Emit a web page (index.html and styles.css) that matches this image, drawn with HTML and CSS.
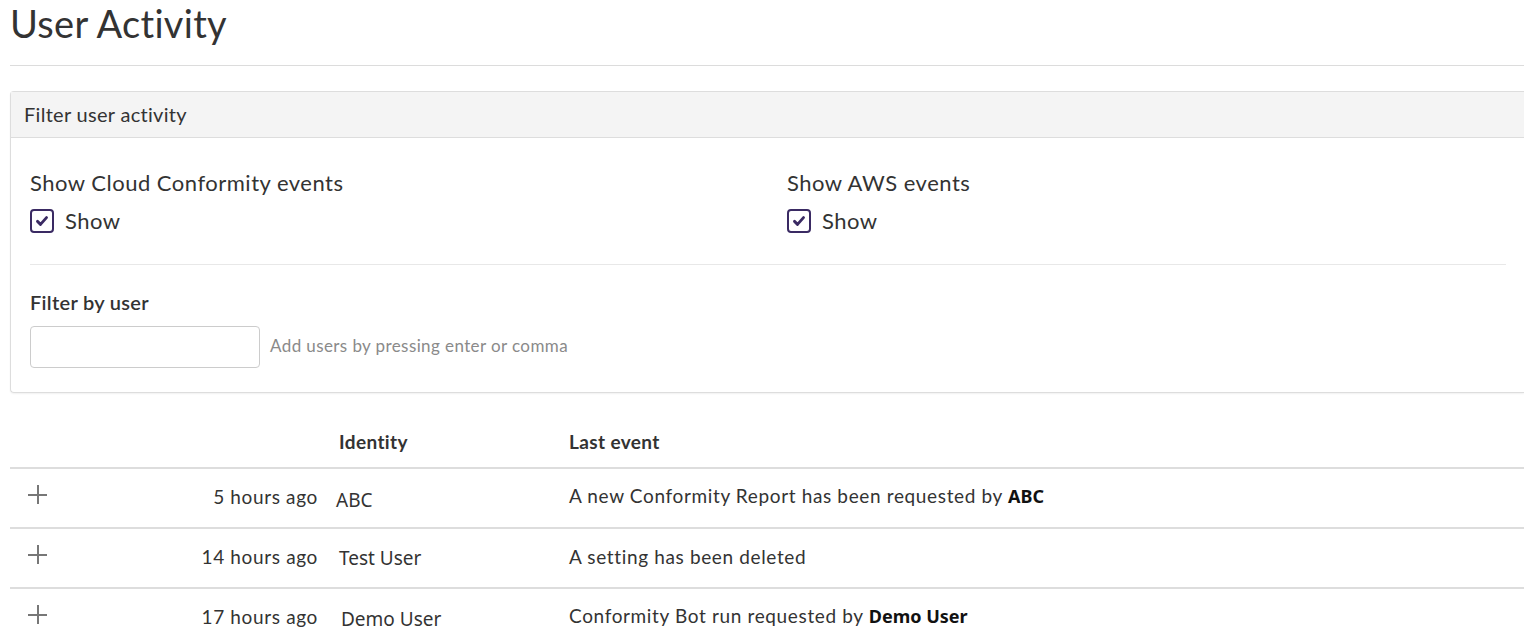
FILE: index.html
```html
<!DOCTYPE html>
<html>
<head>
<meta charset="utf-8">
<link rel="stylesheet" href="styles.css">
</head>
<body>
<div class="page">
  <h1 class="title">User Activity</h1>
  <hr class="rule">
  <section class="panel">
    <div class="panel-head">Filter user activity</div>
    <div class="panel-body">
      <div class="toggles">
        <div class="toggle">
          <div class="toggle-label">Show Cloud Conformity events</div>
          <label class="check">
            <span class="box"><svg viewBox="0 0 24 24"><path d="M6 12.5 L10 16.5 L18 7.5" fill="none" stroke="#3a2a63" stroke-width="3.8" stroke-linecap="round" stroke-linejoin="round"/></svg></span>
            <span>Show</span>
          </label>
        </div>
        <div class="toggle">
          <div class="toggle-label">Show AWS events</div>
          <label class="check">
            <span class="box"><svg viewBox="0 0 24 24"><path d="M6 12.5 L10 16.5 L18 7.5" fill="none" stroke="#3a2a63" stroke-width="3.8" stroke-linecap="round" stroke-linejoin="round"/></svg></span>
            <span>Show</span>
          </label>
        </div>
      </div>
      <div class="divider"></div>
      <div class="user-filter">
        <div class="filter-label">Filter by user</div>
        <div class="filter-row">
          <input class="user-input" type="text">
          <span class="help">Add users by pressing enter or comma</span>
        </div>
      </div>
    </div>
  </section>

  <div class="table">
    <div class="row head">
      <div class="c-plus"></div>
      <div class="c-time"></div>
      <div class="c-id">Identity</div>
      <div class="c-ev">Last event</div>
    </div>
    <div class="row">
      <div class="c-plus"><span class="plus"></span></div>
      <div class="c-time">5 hours ago</div>
      <div class="c-id id1">ABC</div>
      <div class="c-ev">A new Conformity Report has been requested by <b class="who">ABC</b></div>
    </div>
    <div class="row">
      <div class="c-plus"><span class="plus"></span></div>
      <div class="c-time">14 hours ago</div>
      <div class="c-id id2">Test User</div>
      <div class="c-ev">A setting has been deleted</div>
    </div>
    <div class="row">
      <div class="c-plus"><span class="plus"></span></div>
      <div class="c-time">17 hours ago</div>
      <div class="c-id id3">Demo User</div>
      <div class="c-ev">Conformity Bot run requested by <b class="who">Demo User</b></div>
    </div>
  </div>
</div>
</body>
</html>
```

FILE: styles.css
```css
* { box-sizing: border-box; }
html, body { margin: 0; padding: 0; background: #fff; }
body {
  font-family: Lato, "Noto Sans", sans-serif;
  color: #333;
  letter-spacing: 0.04em;
  overflow: hidden;
}
.page {
  padding-left: 10px;
}
.title {
  margin: 0;
  padding-top: 1px;
  font-size: 38px;
  font-weight: 400;
  letter-spacing: 0.3px;
  line-height: 44px;
  color: #333;
}
.rule {
  margin: 20px 0 0 0;
  border: 0;
  border-top: 1px solid #dcdcdc;
  height: 0;
}
.panel {
  margin-top: 25px;
  border: 1px solid #dddddd;
  border-right: 0;
  border-radius: 4px 0 0 4px;
  box-shadow: 0 1px 2px rgba(0,0,0,0.06);
}
.panel-head {
  background: #f4f4f4;
  border-bottom: 1px solid #dddddd;
  height: 46px;
  padding-left: 13px;
  font-size: 20px;
  letter-spacing: 0.3px;
  line-height: 45px;
  color: #333;
}
.panel-body {
  padding: 32px 18px 24px 19px;
}
.toggles {
  display: flex;
}
.toggle {
  flex: none;
  width: 757px;
}
.toggle-label {
  font-size: 22px;
  letter-spacing: 0.5px;
  line-height: 26px;
  color: #333;
}
.check {
  display: flex;
  align-items: center;
  gap: 11px;
  margin-top: 12px;
  font-size: 22px;
  letter-spacing: 0.5px;
  line-height: 26px;
}
.box {
  width: 24px;
  height: 24px;
  border: 2px solid #3a2a63;
  border-radius: 4px;
  display: flex;
  align-items: center;
  justify-content: center;
}
.box svg { width: 18px; height: 18px; display: block; }
.divider {
  margin-top: 30px;
  border-top: 1px solid #e8e8e8;
}
.user-filter {
  padding-top: 25px;
}
.filter-label {
  font-size: 20px;
  line-height: 24px;
  font-weight: 600;
  letter-spacing: 0.3px;
  color: #333;
}
.filter-row {
  margin-top: 12px;
  display: flex;
  align-items: center;
  gap: 10px;
}
.user-input {
  width: 230px;
  height: 42px;
  border: 1px solid #cccccc;
  border-radius: 4px;
  font-size: 16px;
}
.help {
  font-size: 17px;
  letter-spacing: 0.4px;
  color: #8a8a8a;
  margin-top: -3px;
}
.table {
  margin-top: 26px;
}
.row {
  display: grid;
  grid-template-columns: 50px 258px 251px 1fr;
  border-top: 2px solid #dddddd;
  height: 60px;
  align-items: center;
  font-size: 19px;
  color: #333;
}
.row.head {
  border-top: 0;
  height: 48px;
  padding-bottom: 4px;
  font-weight: 700;
  letter-spacing: 0.02em;
}
.row:not(.head) { padding-bottom: 4px; }
.c-time { text-align: right; }
.c-id { padding-left: 21px; }
.id1, .id2, .id3 {
  font-family: "Noto Sans", "Liberation Sans", sans-serif;
  font-size: 19px;
  letter-spacing: 0;
}
.id1 { padding-left: 18px; padding-top: 7px; }
.id2 { padding-left: 21px; padding-top: 3px; }
.id3 { padding-left: 23px; padding-top: 5px; }
.c-ev { padding-left: 0; }
.who {
  font-family: "Noto Sans", "Liberation Sans", sans-serif;
  font-weight: 700;
  font-size: 18px;
  letter-spacing: 0;
  color: #111;
}
.plus {
  display: block;
  position: relative;
  width: 19px;
  height: 19px;
  margin-left: 18px;
  margin-top: -4px;
}
.plus::before, .plus::after {
  content: "";
  position: absolute;
  background: #777;
}
.plus::before { left: 0; right: 0; top: 9px; height: 2px; }
.plus::after { top: 0; bottom: 0; left: 9px; width: 2px; }
```
